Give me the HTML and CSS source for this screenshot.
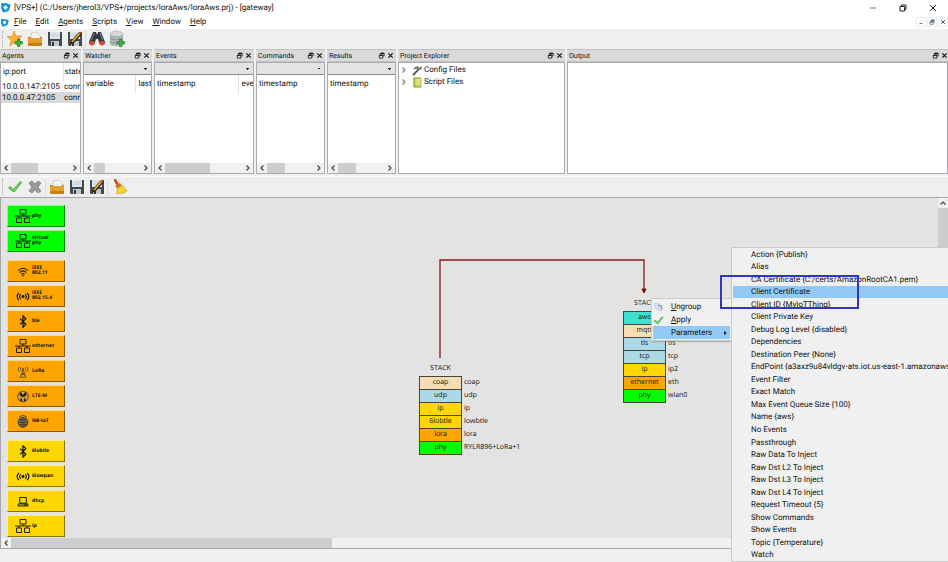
FILE: index.html
```html
<!DOCTYPE html>
<html lang="en">
<head>
<meta charset="utf-8">
<title>[VPS+] gateway</title>
<link rel="stylesheet" href="styles.css">
</head>
<body>
<svg class="sprite" aria-hidden="true">
  <symbol id="app" viewBox="0 0 12 12"><circle cx="6" cy="6" r="4.8" fill="#1592dc"/><circle cx="2.5" cy="2.6" r="1.5" fill="#1592dc"/><circle cx="10" cy="4" r="1.6" fill="#1592dc"/><circle cx="4" cy="10" r="1.5" fill="#1592dc"/><path d="M6 3.2 8.6 6 6 8.8 3.4 6Z" fill="#fff"/></symbol>
  <symbol id="open" viewBox="0 0 16 16"><path d="M1 14V6h3l1-2 8 1 2 2v7Z" fill="#b87a12"/><path d="M4 8V2l6-1 3 3v4Z" fill="#f4f4f4" stroke="#bbb" stroke-width=".6"/><path d="M1 7h13l1 1v6l-1 1H2l-1-1Z" fill="#e3a02c"/><path d="M1 12h14v2l-1 1H2l-1-1Z" fill="#c08013"/></symbol>
  <symbol id="save" viewBox="0 0 16 16"><path d="M1 1h14v14H2l-1-1Z" fill="#454a50"/><path d="M3 1h10v7H3Z" fill="#dfe7ee"/><path d="M4 3h8M4 5h8" stroke="#b9c6d0" stroke-width=".8"/><path d="M4 10h8v5H4Z" fill="#c4c8cc"/><path d="M5 11h2v4H5Z" fill="#30343a"/></symbol>
  <symbol id="saveas" viewBox="0 0 16 16"><use href="#save"/><path d="m3 14 1-4 8-9 3 2-8 9Z" fill="#252525"/><path d="m5 11 8-9" stroke="#f2b01e" stroke-width="1.8"/><path d="m12.600 2.500 1.300-1.500" stroke="#d33" stroke-width="1.800"/></symbol>
  <symbol id="newstar" viewBox="0 0 16 16"><path d="m7 0 2 5 6 0-4.500 4 2 6L7.300 12 2.500 15l1.600-5.700L0 5.500h5Z" fill="#f9b233" stroke="#e08a1e" stroke-width=".6"/><use href="#plus"/></symbol>
  <symbol id="plus" viewBox="0 0 16 16"><path d="M10.500 8h2.500v2.500h2.500V13H13v2.500h-2.500V13H8v-2.500h2.500Z" fill="#35b53a" stroke="#1c7c22" stroke-width=".6"/></symbol>
  <symbol id="find" viewBox="0 0 16 16"><path d="M4 1h3l1 3 1-3h3l4 10-1 3h-4L9 8H7l-2 6H1l-1-3Z" fill="#353a42"/><path d="M5 2 2.500 9M11 2l2.500 7" stroke="#7b828c"/><ellipse cx="3" cy="12.300" rx="2.400" ry="2.200" fill="#e8472b"/><ellipse cx="13" cy="12.300" rx="2.400" ry="2.200" fill="#e8472b"/></symbol>
  <symbol id="db" viewBox="0 0 16 16"><path d="M1 3v10c0 3 13 3 13 0V3Z" fill="#b2b6b9"/><ellipse cx="7.500" cy="3" rx="6.500" ry="2.500" fill="#d9dcde" stroke="#999" stroke-width=".5"/><path d="M1 6.500c0 3 13 3 13 0M1 10c0 3 13 3 13 0" fill="none" stroke="#8b9094"/><use href="#plus"/></symbol>
  <symbol id="check" viewBox="0 0 16 16"><path d="m1.500 9 1.500-1.500 3.500 3L13.500 2.500 14.500 3.500 7 13Z" fill="#7fe070" stroke="#35a53a" stroke-width="1"/></symbol>
  <symbol id="cross" viewBox="0 0 16 16"><path d="m2 4 3-2 3 3 3-3 3 2-3 4 3 4-3 2-3-3-3 3-3-2 3-4Z" fill="#9a9a9a" stroke="#777" stroke-width=".7"/></symbol>
  <symbol id="broom" viewBox="0 0 16 16"><path d="m3 0 2 0 3 5-2 2-3-5Z" fill="#c8502b"/><path d="m4 7 5-3 2 3-4 3Z" fill="#d96f28"/><path d="m6 10 5-4 5 6-2 0 0 2-2-1-1 2-2-1-3 1Z" fill="#f7d42f" stroke="#c49a12" stroke-width=".6"/></symbol>
  <symbol id="float" viewBox="0 0 8 8"><path d="M3 3V1.500h4v3H5.500M1.500 3.500h4V7h-4Z" fill="none" stroke="currentColor" stroke-width=".9"/><path d="M3 1.500h4M1.500 3.700h4" stroke="currentColor" stroke-width="1.300"/></symbol>
  <symbol id="close" viewBox="0 0 8 8"><path d="m1.500 1.500 5 5m0-5-5 5" stroke="currentColor" stroke-width="1.300"/></symbol>
  <symbol id="left" viewBox="0 0 8 8"><path d="M5.500 1.500 3 4l2.500 2.500" fill="none" stroke="#444" stroke-width="1.200"/></symbol>
  <symbol id="right" viewBox="0 0 8 8"><path d="M2.500 1.500 5 4 2.500 6.500" fill="none" stroke="#444" stroke-width="1.200"/></symbol>
  <symbol id="up" viewBox="0 0 8 8"><path d="M1.500 5.500 4 3l2.500 2.500" fill="none" stroke="#444" stroke-width="1.200"/></symbol>
  <symbol id="net" viewBox="0 0 16 16"><path d="M5 1.500h6v4.500H5ZM1.500 10h5v4.500h-5ZM9.500 10h5v4.500h-5ZM8 6v2M0 8h16M4 8v2M12 8v2" fill="none" stroke="#111" stroke-width=".9"/></symbol>
  <symbol id="wifi" viewBox="0 0 16 16"><path d="M2 7c4-4 8-4 12 0M4 9.300c3-3 5-3 8 0M6 11.400c1.500-1.400 2.500-1.400 4 0" fill="none" stroke="#111" stroke-width="1.300"/><circle cx="8" cy="13" r="1" fill="#111"/></symbol>
  <symbol id="radio" viewBox="0 0 16 16"><circle cx="8" cy="8" r="1.800" fill="#111"/><path d="M5.300 5c-2 2-2 4 0 6M10.700 5c2 2 2 4 0 6M3 3.500c-3 3-3 6 0 9M13 3.500c3 3 3 6 0 9" fill="none" stroke="#111" stroke-width="1.400"/></symbol>
  <symbol id="bt" viewBox="0 0 16 16"><path d="m4.500 4.500 7 7L8 15V1l3.500 3.500-7 7" fill="none" stroke="#111" stroke-width="1.500"/></symbol>
  <symbol id="tower" viewBox="0 0 16 16"><path d="M8 6 4.500 15M8 6l3.500 9M6 10.500h4M5.500 13l4-2.500M10.500 13l-4-2.500M4 15h8M5.500 3c-1 1.500-1 3 0 4.500M10.500 3c1 1.500 1 3 0 4.500M3.500 2c-2 2-2 4.500 0 6.500M12.500 2c2 2 2 4.500 0 6.500" fill="none" stroke="#4d4330" stroke-width="1"/><circle cx="8" cy="5" r="1.200" fill="#4d4330"/></symbol>
  <symbol id="ltem" viewBox="0 0 16 16"><circle cx="8" cy="8" r="6.500" fill="#e8a73a" stroke="#5a5540" stroke-width="1.300"/><path d="M4 3h2l2 3 2-3h2v4l-4 2-4-2ZM5 9l2 2v3H5ZM11 9 9 11v3h2Z" fill="#222"/></symbol>
  <symbol id="globe" viewBox="0 0 16 16"><circle cx="8" cy="9" r="6" fill="#9a8150" stroke="#333" stroke-width="1.200"/><path d="M8 3v12M2 9h12M3 6h10M3 12h10M5.500 4v10M10.500 4v10M3 3c3-3 7-3 10 0" fill="none" stroke="#333" stroke-width="1"/></symbol>
  <symbol id="pc" viewBox="0 0 16 16"><path d="M4 3h8v7H4ZM2 11h12v2.500H2ZM9 12.200h4" fill="none" stroke="#111" stroke-width="1.200"/></symbol>
</svg>

<header class="chrome">
  <div class="titlebar">
    <svg class="logo"><use href="#app"/></svg>
    <h1>[VPS+] (C:/Users/jherol3/VPS+/projects/loraAws/loraAws.prj) - [gateway]</h1>
    <div class="winctl">
      <button aria-label="Minimize"><svg viewBox="0 0 8 8"><path d="M1 4h6" stroke="#777"/></svg></button>
      <button aria-label="Restore"><svg viewBox="0 0 8 8"><path d="M1 2.500h4.500V7H1ZM2.500 2.500V1H7v4.500H5.500" fill="none" stroke="#222"/></svg></button>
      <button aria-label="Close"><svg viewBox="0 0 8 8"><path d="m1 1 6 6m0-6L1 7" stroke="#222"/></svg></button>
    </div>
  </div>
  <nav class="menubar">
    <svg class="logo small"><use href="#app"/></svg>
    <a href="#"><u>F</u>ile</a><a href="#"><u>E</u>dit</a><a href="#"><u>A</u>gents</a><a href="#"><u>S</u>cripts</a><a href="#"><u>V</u>iew</a><a href="#"><u>W</u>indow</a><a href="#"><u>H</u>elp</a>
    <div class="mdictl">
      <button aria-label="Minimize document"><svg viewBox="0 0 8 8"><path d="M2 6h4" stroke="currentColor"/></svg></button>
      <button aria-label="Restore document"><svg><use href="#float"/></svg></button>
      <button aria-label="Close document"><svg><use href="#close"/></svg></button>
    </div>
  </nav>
  <div class="toolbar">
    <i class="grip"></i>
    <button aria-label="New"><svg><use href="#newstar"/></svg></button>
    <button aria-label="Open"><svg><use href="#open"/></svg></button>
    <button aria-label="Save"><svg><use href="#save"/></svg></button>
    <button aria-label="Save as"><svg><use href="#saveas"/></svg></button>
    <i class="sep"></i>
    <button aria-label="Find"><svg><use href="#find"/></svg></button>
    <button aria-label="Add database"><svg><use href="#db"/></svg></button>
  </div>
</header>

<main class="docks">
  <section class="dock">
    <div class="head"><h2>Agents</h2><button aria-label="Float"><svg><use href="#float"/></svg></button><button aria-label="Close"><svg><use href="#close"/></svg></button></div>
    <div class="pane">
      <table class="agents"><thead><tr><th>ip:port</th><th>state</th></tr></thead><tbody><tr><td>10.0.0.147:2105</td><td>connected</td></tr><tr class="sel"><td>10.0.0.47:2105</td><td>connected</td></tr></tbody></table>
      <div class="hscroll"><svg><use href="#left"/></svg><div class="track"><i class="t-agents"></i></div><svg><use href="#right"/></svg></div>
    </div>
  </section>
  <section class="dock">
    <div class="head"><h2>Watcher</h2><button aria-label="Float"><svg><use href="#float"/></svg></button><button aria-label="Close"><svg><use href="#close"/></svg></button></div>
    <div class="pane">
      <select aria-label="Watcher filter"><option></option></select>
      <table><thead><tr><th class="w-var">variable</th><th>last</th></tr></thead></table>
      <div class="hscroll"><svg><use href="#left"/></svg><div class="track"><i class="t-watcher"></i></div><svg><use href="#right"/></svg></div>
    </div>
  </section>
  <section class="dock">
    <div class="head"><h2>Events</h2><button aria-label="Float"><svg><use href="#float"/></svg></button><button aria-label="Close"><svg><use href="#close"/></svg></button></div>
    <div class="pane">
      <select aria-label="Events filter"><option></option></select>
      <table><thead><tr><th class="w-time">timestamp</th><th>event</th></tr></thead></table>
      <div class="hscroll"><svg><use href="#left"/></svg><div class="track"><i class="t-events"></i></div><svg><use href="#right"/></svg></div>
    </div>
  </section>
  <section class="dock">
    <div class="head"><h2>Commands</h2><button aria-label="Float"><svg><use href="#float"/></svg></button><button aria-label="Close"><svg><use href="#close"/></svg></button></div>
    <div class="pane">
      <select aria-label="Commands filter"><option></option></select>
      <table><thead><tr><th>timestamp</th></tr></thead></table>
      <div class="hscroll"><svg><use href="#left"/></svg><div class="track"><i class="t-commands"></i></div><svg><use href="#right"/></svg></div>
    </div>
  </section>
  <section class="dock">
    <div class="head"><h2>Results</h2><button aria-label="Float"><svg><use href="#float"/></svg></button><button aria-label="Close"><svg><use href="#close"/></svg></button></div>
    <div class="pane">
      <select aria-label="Results filter"><option></option></select>
      <table><thead><tr><th>timestamp</th></tr></thead></table>
      <div class="hscroll"><svg><use href="#left"/></svg><div class="track"><i class="t-commands"></i></div><svg><use href="#right"/></svg></div>
    </div>
  </section>
  <section class="dock">
    <div class="head"><h2>Project Explorer</h2><button aria-label="Float"><svg><use href="#float"/></svg></button><button aria-label="Close"><svg><use href="#close"/></svg></button></div>
    <div class="pane">
      <ul class="tree">
        <li><svg class="chev"><use href="#right"/></svg><svg class="ico" viewBox="0 0 12 12"><path d="m1 11 6-6" stroke="#555" stroke-width="2"/><path d="M2 3 6 1l2 2 3-2-1 4-3 1-2-2-3 1Z" fill="#777"/></svg>Config Files</li>
        <li><svg class="chev"><use href="#right"/></svg><svg class="ico" viewBox="0 0 12 12"><path d="M2 1h8v10H2Z" fill="#c3cb4c" stroke="#8f9832"/><path d="M4 2h5v7H4Z" fill="#dde27c"/><path d="M10 1v10" stroke="#eee"/></svg>Script Files</li>
      </ul>
    </div>
  </section>
  <section class="dock">
    <div class="head last"><h2>Output</h2><button aria-label="Float"><svg><use href="#float"/></svg></button><button aria-label="Close"><svg><use href="#close"/></svg></button></div>
    <div class="pane"></div>
  </section>
</main>

<div class="toolbar lower">
  <i class="grip"></i>
  <button aria-label="Apply"><svg><use href="#check"/></svg></button>
  <button aria-label="Cancel"><svg><use href="#cross"/></svg></button>
  <i class="sep"></i>
  <button aria-label="Open"><svg><use href="#open"/></svg></button>
  <button aria-label="Save"><svg><use href="#save"/></svg></button>
  <button aria-label="Save as"><svg><use href="#saveas"/></svg></button>
  <i class="sep"></i>
  <button aria-label="Clean"><svg><use href="#broom"/></svg></button>
</div>

<section class="editor">
  <div class="canvas">
    <div class="palette">
      <div class="group green">
        <button><svg class="wide"><use href="#net"/></svg><span>phy</span></button>
        <button><svg class="wide"><use href="#net"/></svg><span>virtual<br>phy</span></button>
      </div>
      <div class="group orange">
        <button><svg><use href="#wifi"/></svg><span>IEEE<br>802.11</span></button>
        <button><svg><use href="#radio"/></svg><span>IEEE<br>802.15.4</span></button>
        <button><svg><use href="#bt"/></svg><span>ble</span></button>
        <button><svg class="wide"><use href="#net"/></svg><span>ethernet</span></button>
        <button><svg><use href="#tower"/></svg><span>LoRa</span></button>
        <button><svg><use href="#ltem"/></svg><span>LTE-M</span></button>
        <button><svg><use href="#globe"/></svg><span>NB-IoT</span></button>
      </div>
      <div class="group gold">
        <button><svg><use href="#bt"/></svg><span>6lobtle</span></button>
        <button><svg><use href="#radio"/></svg><span>6lowpan</span></button>
        <button><svg><use href="#pc"/></svg><span>dhcp</span></button>
        <button><svg class="wide"><use href="#net"/></svg><span>ip</span></button>
      </div>
    </div>
    <svg class="link" viewBox="0 0 210 104"><path d="M2 102V4h204v31" fill="none" stroke="#8b1a1e" stroke-width="1.300"/><path d="m204 33 2 4 2-4Z" fill="#7d0f14" stroke="#7d0f14"/></svg>
    <div class="stack coap">
      <b>STACK</b>
      <dl>
        <div><dt class="wheat">coap</dt><dd>coap</dd></div>
        <div><dt class="blue">udp</dt><dd>udp</dd></div>
        <div><dt class="gold">ip</dt><dd>ip</dd></div>
        <div><dt class="gold">6lobtle</dt><dd>lowbtle</dd></div>
        <div><dt class="orange">lora</dt><dd>lora</dd></div>
        <div><dt class="green">phy</dt><dd>RYLR896+LoRa+1</dd></div>
      </dl>
    </div>
    <div class="stack aws">
      <b>STACK</b>
      <dl>
        <div><dt class="teal">aws</dt><dd></dd></div>
        <div><dt class="wheat">mqtt</dt><dd></dd></div>
        <div><dt class="blue">tls</dt><dd>tls</dd></div>
        <div><dt class="blue">tcp</dt><dd>tcp</dd></div>
        <div><dt class="gold">ip</dt><dd>ip2</dd></div>
        <div><dt class="orange">ethernet</dt><dd>eth</dd></div>
        <div><dt class="green">phy</dt><dd>wlan0</dd></div>
      </dl>
    </div>
  </div>
  <div class="vscroll"><svg><use href="#up"/></svg><i></i></div>
  <div class="hscroll"><svg><use href="#left"/></svg><div class="track"><i class="t-canvas"></i></div><svg><use href="#right"/></svg></div>
</section>
<footer class="status"></footer>

<div class="menu context">
  <button><svg viewBox="0 0 12 12"><path d="M2 2h5v3l3 0v4H6V7H2Z" fill="#e3edf8" stroke="#8faed2" stroke-dasharray="1.500 1"/><path d="M5 4h4v4" fill="none" stroke="#6f94c4"/></svg><span><u>U</u>ngroup</span></button>
  <button><svg><use href="#check"/></svg><span><u>A</u>pply</span></button>
  <button class="hot"><i></i><span>Parameters</span><svg class="arrow" viewBox="0 0 8 8"><path d="m3 1 3 3-3 3Z"/></svg></button>
</div>
<div class="menu params">
  <button>Action {Publish}</button>
  <button>Alias</button>
  <button>CA Certificate {C:/certs/AmazonRootCA1.pem}</button>
  <button class="hot">Client Certificate</button>
  <button>Client ID {MyIoTThing}</button>
  <button>Client Private Key</button>
  <button>Debug Log Level {disabled}</button>
  <button>Dependencies</button>
  <button>Destination Peer {None}</button>
  <button>EndPoint {a3axz9u84vldgv-ats.iot.us-east-1.amazonaws.com}</button>
  <button>Event Filter</button>
  <button>Exact Match</button>
  <button>Max Event Queue Size {100}</button>
  <button>Name {aws}</button>
  <button>No Events</button>
  <button>Passthrough</button>
  <button>Raw Data To Inject</button>
  <button>Raw Dst L2 To Inject</button>
  <button>Raw Dst L3 To Inject</button>
  <button>Raw Dst L4 To Inject</button>
  <button>Request Timeout {5}</button>
  <button>Show Commands</button>
  <button>Show Events</button>
  <button>Topic {Temperature}</button>
  <button>Watch</button>
</div>
<div class="callout"></div>
</body>
</html>
```
FILE: styles.css
```css
* { box-sizing: border-box; }
body {
  margin: 0;
  height: 100vh;
  overflow: hidden;
  position: relative;
  display: flex;
  flex-direction: column;
  background: #f0f0f0;
  color: #111;
  font: 8px/12px Roboto, "Open Sans", sans-serif;
  text-rendering: geometricPrecision;
}
button, select { font: inherit; color: inherit; text-rendering: inherit; border: 0; padding: 0; margin: 0; background: none; }
svg { display: block; flex: none; }
h1, h2, ul, dl, dd { margin: 0; padding: 0; font-weight: 400; }
a { color: inherit; text-decoration: none; }
.sprite { position: absolute; width: 0; height: 0; }

/* window chrome */
.titlebar, .menubar { display: flex; align-items: center; background: #fff; }
.titlebar { height: 15px; padding-right: 11px; }
.titlebar h1 { font-size: 8px; margin-left: 3px; }
.logo { width: 11px; height: 11px; }
.logo.small { width: 9px; height: 9px; margin-right: -4px; }
.winctl { margin-left: auto; display: flex; gap: 22px; }
.winctl svg { width: 8px; height: 8px; }
.menubar { height: 14px; gap: 9px; }
.mdictl { margin-left: auto; display: flex; gap: 1px; color: #456; }
.mdictl button { padding: 1px; border: 1px solid #eee; }
.mdictl svg { width: 6px; height: 6px; }

.toolbar { display: flex; align-items: center; gap: 4px; height: 20px; padding-left: 2px; background: #efefef; }
.toolbar svg { width: 16px; height: 16px; }
.toolbar.lower { height: 21px; margin-top: 2px; border-top: 1px solid #fbfbfb; }
.grip { width: 1px; height: 16px; border-left: 1px dotted #aaa; }
.sep { width: 1px; height: 16px; margin: 0 -1px 0 -2px; background: #dcdcdc; }

/* dock panels */
.docks {
  display: grid;
  grid-template-columns: 81fr 69fr 100fr 69fr 69fr 167fr 381fr;
  gap: 2px;
  height: 125px;
}
.dock { min-width: 0; display: flex; flex-direction: column; }
.head {
  display: flex;
  align-items: center;
  height: 13px;
  padding: 0 2px;
  gap: 2px;
  background: #dadada;
  border-top: 1px solid #c2c2c2;
  border-bottom: 1px solid #c2c2c2;
}
.head h2 { flex: 1; font-size: 7px; }
.head svg { width: 7px; height: 7px; }
.head.last { padding-right: 0; }
.pane {
  flex: 1;
  min-height: 0;
  display: flex;
  flex-direction: column;
  overflow: hidden;
  background: #fff;
  border: 1px solid #a9abb0;
}
.pane select {
  appearance: none;
  height: 12px;
  border-bottom: 1px solid #888;
  background-color: #e3e3e3;
  background-image: linear-gradient(-135deg, #222 50%, transparent 50%), linear-gradient(135deg, #222 50%, transparent 50%);
  background-repeat: no-repeat;
  background-size: 2px 2px;
  background-position: right 5px center, right 3px center;
}
table { table-layout: fixed; width: 100%; border-collapse: collapse; }
th, td { padding: 0 0 0 2px; font-weight: 400; text-align: left; overflow: hidden; white-space: nowrap; }
td { padding-left: 1px; line-height: 11px; }
th { height: 18px; }
th + th { border-left: 1px solid #e3e3e3; padding-left: 3px; }
.agents th:first-child { width: 62px; }
.agents th + th, .agents td + td { padding-left: 1px; }
.w-var { width: 51px; }
.w-time { width: 83px; }
.sel { background: #d9d9d9; }

.hscroll { display: flex; align-items: center; height: 10px; margin-top: auto; background: #f0f0f0; }
.hscroll svg { width: 8px; height: 8px; margin: 0 1px; }
.track { flex: 1; align-self: stretch; display: flex; }
.track i { background: #cdcdcd; }
.t-agents { width: 46%; }
.t-watcher { width: 24%; }
.t-events { width: 58%; }
.t-commands { width: 39%; }
.t-canvas { width: 35%; }

.tree { list-style: none; padding-top: 1px; }
.tree li { display: flex; align-items: center; height: 12px; }
.chev { width: 8px; height: 8px; margin: 0 4px 0 1px; opacity: .7; }
.ico { width: 11px; height: 11px; margin-right: 1px; }

/* editor */
.editor {
  flex: 1;
  min-height: 0;
  display: grid;
  grid-template: minmax(0, 1fr) 10px / minmax(0, 1fr) 10px;
  border: solid #a5a7ac;
  border-width: 1px 0 1px 1px;
}
.canvas { position: relative; overflow: hidden; background: #e3e3e3; }
.vscroll { background: #f0f0f0; display: flex; flex-direction: column; align-items: center; }
.vscroll svg { width: 8px; height: 8px; margin: 1px; }
.vscroll i { width: 100%; height: 55px; background: #cdcdcd; }
.status { height: 13px; }

.green { --fill: #00ff00; }
.orange { --fill: #ffa500; }
.gold { --fill: #ffd700; }
.blue { --fill: #add8e6; }
.wheat { --fill: #f5deb3; }
.teal { --fill: #40e0d0; }

.palette { display: flex; flex-direction: column; gap: 8px; padding: 7px 6px; }
.group { display: flex; flex-direction: column; align-items: flex-start; gap: 3px; }
.group button {
  display: flex;
  align-items: center;
  width: 58px;
  height: 22px;
  padding-left: 7px;
  background: var(--fill);
  border: 1px solid;
  border-color: #ffffff88 #00000077 #00000077 #ffffff88;
  font: 700 5px/5px "Open Sans", "Noto Sans", sans-serif;
  text-align: left;
}
.group svg { width: 16px; height: 13px; margin-right: 1px; }
.group .wide { height: 16px; }

.stack { position: absolute; width: 43px; font: 7px/12px "Open Sans", "Noto Sans", sans-serif; }
.stack.coap { left: 418px; top: 165px; }
.stack.aws { left: 622px; top: 100px; }
.stack b { display: block; height: 13px; font-weight: 400; text-align: center; }
.stack dl { border-top: 1px solid #444; }
.stack dl div { display: flex; }
.stack dt {
  flex: none;
  width: 43px;
  height: 13px;
  text-align: center;
  background: var(--fill);
  border: 1px solid #444;
  border-top: 0;
}
.stack dd { padding-left: 2px; white-space: nowrap; }
.link { position: absolute; left: 437px; top: 58px; width: 210px; height: 104px; }

/* popup menus */
.menu { position: absolute; display: grid; background: #f0f0f0; border: 1px solid #ccc; }
.menu button { display: flex; align-items: center; padding-top: 1px; text-align: left; white-space: nowrap; line-height: 12px; }
.menu .hot { background: #91c9f7; }
.context { left: 651px; top: 298px; width: 81px; height: 43px; padding: 1px; box-shadow: 1px 1px 1px #8888; }
.context span { flex: 1; margin-left: 7px; }
.context svg, .context i { width: 11px; height: 11px; }
.context .arrow { width: 6px; height: 6px; margin-right: 2px; }
.params { left: 731px; right: -2px; top: 247px; bottom: 0; overflow: hidden; padding-left: 1px; }
.params button { padding-left: 18px; min-height: 0; }
.callout { position: absolute; left: 720px; top: 275px; width: 139px; height: 34px; border: 2px solid #3036c4; }
```
